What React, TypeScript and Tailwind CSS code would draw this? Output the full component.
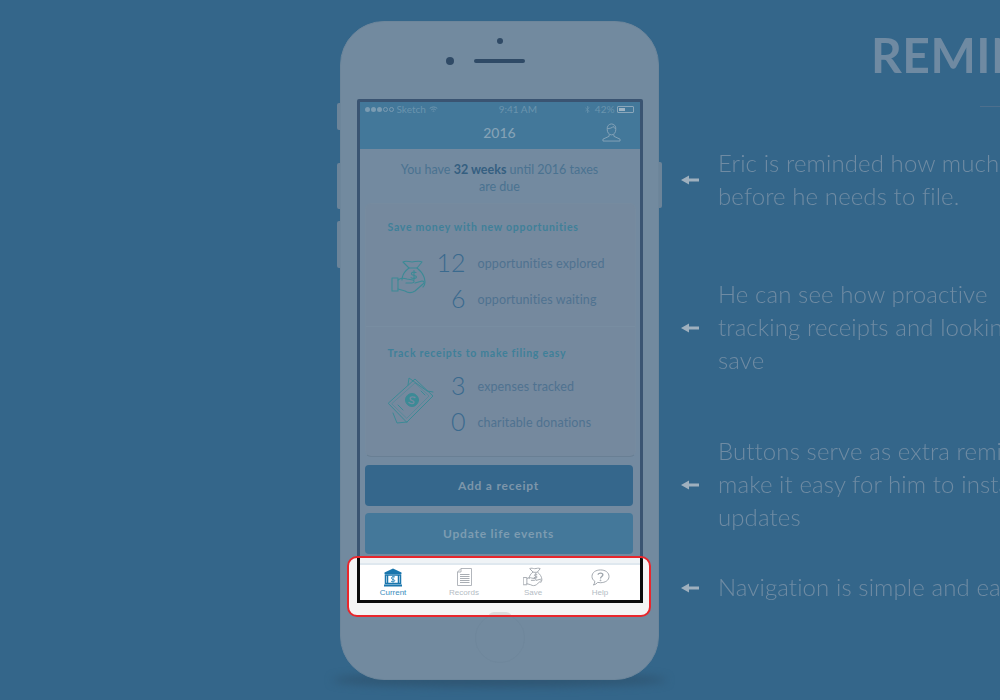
const Bag = ({ c, w = 1.1 }: { c: string; w?: number }) => (
  <svg viewBox="0 0 36 36" className="w-full h-full" fill="none" stroke={c} strokeWidth={w} strokeLinejoin="round" strokeLinecap="round">
    <path d="M18 9 L12 3 C15 1 18 3 21 3 C24 3 28 1 31 3 L26 9 Z" />
    <path d="M18 9 C14 12 11 16 11 21 M26 9 C31 13 34 18 34 23 C34 25 33 27 32 28" />
    <path d="M1 19 H7 V32 H1 Z" />
    <path d="M7 21 C10 18 13 19 16 20 L22 21 C24 22 23 24 21 24 L15 24 M24 24 L31 22 C33 22 34 24 32 25 L24 32 C21 34 17 34 14 32 L7 30" />
    <path d="M25 13.500 C22.500 12.500 20 13.500 20.500 15.200 C21 17 25.500 16 25.500 18 C25.500 19.500 22.500 20 20 18.800 M23 11.500 V20.500" />
  </svg>
);

const Cash = () => (
  <svg viewBox="0 0 48 48" className="w-full h-full" fill="none" stroke="#3c8a96" strokeWidth="1" strokeLinejoin="round" strokeLinecap="round">
    <path d="M0.500 26 L27 2 L45 19 L19 45 Z" />
    <path d="M4 26.500 L27 6 L41 19 L19 41 Z" strokeWidth="0.500" />
    <path d="M20 8 L21 1 L39 14 L45 15" />
    <path d="M5 36 L9 46 L19 45" />
    <path d="M10 28 L15 33 M33 14 L37 18" />
    <circle cx="24" cy="23" r="6.500" fill="#3c8a96" />
    <path d="M27 20.500 C24 19 21.500 20.500 22.500 22.500 C23.500 24 26.500 23.500 26 25.500 C25.500 27 23 27 21 25.500" stroke="#738aa0" strokeWidth="1.400" />
  </svg>
);

const Note = ({ lines }: { lines: string[] }) => (
  <div className="flex items-center">
    <svg viewBox="0 0 18 10" className="w-[18px] h-[10px] shrink-0 mr-[19px]">
      <path d="M0 5 L8 0.500 V3.500 H18 V6.500 H8 V9.500 Z" fill="#9fb0be" />
    </svg>
    <div className="text-[24px] leading-[33px] font-light text-[#6f8ba3] whitespace-nowrap tracking-[0.1px] -translate-y-px">
      {lines.map((l) => (
        <div key={l}>{l}</div>
      ))}
    </div>
  </div>
);

const Stat = ({ n, label }: { n: string; label: string }) => (
  <div className="flex items-center h-[36px]">
    <div className="w-[41px] text-right text-[25px] font-light text-[#3a6a8e] -translate-y-px">{n}</div>
    <div className="ml-[12px] text-[12.5px] text-[#4f7290] tracking-[0.12px]">{label}</div>
  </div>
);

const Tab = ({ label, active, className, children }: { label: string; active?: boolean; className: string; children: React.ReactNode }) => (
  <div className={`w-[60px] flex flex-col items-center ${className}`}>
    <div className="h-[20px] flex items-center justify-center">{children}</div>
    <div className={`text-[8px] leading-[10px] mt-[1px] font-['Liberation_Sans',sans-serif] ${active ? "text-[#3a8dbd]" : "text-[#b4bcc4]"}`}>{label}</div>
  </div>
);

export default function App() {
  return (
    <div className="w-[1000px] h-[700px] overflow-hidden bg-[#34668a] flex pl-[340px] font-['Lato',sans-serif]">
      <div className="relative w-[319px] h-[659px] mt-[21px] shrink-0 blur-[0.4px]">
        {/* shadow + side keys */}
        <div className="absolute left-[-8px] right-[-8px] bottom-[-7px] h-[14px] rounded-[50%] bg-[#2f5673] blur-[4px]" />
        <div className="absolute left-[-3px] top-[82px] w-[4px] h-[27px] rounded-l-[2px] bg-[#6c8499]" />
        <div className="absolute left-[-3px] top-[142px] w-[4px] h-[46px] rounded-l-[2px] bg-[#6c8499]" />
        <div className="absolute left-[-3px] top-[200px] w-[4px] h-[47px] rounded-l-[2px] bg-[#6c8499]" />
        <div className="absolute right-[-3px] top-[141px] w-[4px] h-[46px] rounded-r-[2px] bg-[#6c8499]" />

        <div className="relative h-full rounded-[44px] bg-[#728a9f] border border-[#6d869b] flex flex-col items-center">
          <div className="w-[6px] h-[6px] rounded-full bg-[#2f4a66] mt-[16px]" />
          <div className="flex items-center mt-[13px] h-[8px] relative">
            <div className="absolute left-[-28px] w-[8px] h-[8px] rounded-full bg-[#2f4a66]" />
            <div className="w-[51px] h-[4px] rounded-full bg-[#2f4a66]" />
          </div>

          {/* Screen */}
          <div className="w-[286px] h-[505px] mt-[34px] border-[3px] border-[#3a5472] rounded-[2px] bg-[#738aa0] flex flex-col">
            <div className="bg-[#43789a] h-[47px] shrink-0 relative">
              <div className="h-[14px] px-[5px] flex items-center justify-between text-[10px] text-[#6a94ae]">
                <div className="flex items-center gap-[3px]">
                  <span className="flex gap-[1px]">
                    <i className="w-[5px] h-[5px] rounded-full bg-[#7a9bb2]" />
                    <i className="w-[5px] h-[5px] rounded-full bg-[#7a9bb2]" />
                    <i className="w-[5px] h-[5px] rounded-full bg-[#7a9bb2]" />
                    <i className="w-[5px] h-[5px] rounded-full border border-[#7a9bb2]" />
                    <i className="w-[5px] h-[5px] rounded-full border border-[#7a9bb2]" />
                  </span>
                  <span>Sketch</span>
                  <svg viewBox="0 0 12 9" className="w-[9px] h-[7px]" fill="none" stroke="#7a9bb2" strokeWidth="1.100">
                    <path d="M1 3 C4 0.500 8 0.500 11 3 M3 5 C5 3.500 7 3.500 9 5 M5 7 C5.600 6.500 6.400 6.500 7 7" />
                  </svg>
                </div>
                <span className="ml-[13px]">9:41 AM</span>
                <div className="flex items-center gap-[3px]">
                  <svg viewBox="0 0 6 10" className="w-[5px] h-[9px]" fill="none" stroke="#6a94ae" strokeWidth="0.800">
                    <path d="M0.500 3 L5 7 L3 9 V1 L5 3 L0.500 7" />
                  </svg>
                  <span className="ml-[2px]">42%</span>
                  <div className="w-[17px] h-[7px] border border-[#8aa6ba] rounded-[1px] p-[1px]">
                    <div className="w-[6px] h-full bg-[#9db3c3]" />
                  </div>
                </div>
              </div>
              <div className="text-center text-[14px] font-medium text-[#85a2b6] mt-[4px] leading-[26px]">2016</div>
              <svg viewBox="0 0 20 20" className="absolute right-[19px] top-[21px] w-[19px] h-[19px]" fill="none" stroke="#86a3b8" strokeWidth="1">
                <path d="M5.500 7 C5 3 7.500 1 10 1 C12.500 1 15 3 14.500 7 C14.500 10 12.500 12.500 10 12.500 C7.500 12.500 5.500 10 5.500 7 Z" />
                <path d="M5.500 6 C8 6 11 5 12 3.500 C12.500 5 13.500 6 14.500 6" />
                <path d="M7.500 12 V14 L1 17 V19 H19 V17 L12.500 14 V12" />
              </svg>
            </div>

            <div className="flex-1 min-h-0 px-[5px] flex flex-col">
              <div className="text-center text-[12.5px] leading-[17px] text-[#4a7290] mt-[12px] px-[30px]">
                You have <b className="font-bold text-[#355f80]">32 weeks</b> until 2016 taxes are due
              </div>

              <div className="mt-[8px] w-[271px] h-[254px] rounded-[6px] border border-[#768b9f] border-b-[#697f94] bg-[#75899e] shrink-0 flex flex-col">
                <div className="h-[123px] border-b border-[#788da1] pl-[22px] pt-[16px]">
                  <div className="text-[10.5px] leading-[14px] font-bold text-[#3f8099] tracking-[0.73px]">Save money with new opportunities</div>
                  <div className="flex mt-[12px]">
                    <div className="w-[36px] h-[36px] ml-[3px] mt-[13px]"><Bag c="#3c8a96" /></div>
                    <div className="ml-[-2px]">
                      <Stat n="12" label="opportunities explored" />
                      <Stat n="6" label="opportunities waiting" />
                    </div>
                  </div>
                </div>
                <div className="pl-[22px] pt-[19px]">
                  <div className="text-[10.5px] leading-[14px] font-bold text-[#3f8099] tracking-[0.73px]">Track receipts to make filing easy</div>
                  <div className="flex mt-[9px]">
                    <div className="w-[48px] h-[48px] mt-[8px]"><Cash /></div>
                    <div className="ml-[-11px]">
                      <Stat n="3" label="expenses tracked" />
                      <Stat n="0" label="charitable donations" />
                    </div>
                  </div>
                </div>
              </div>

              <div className="mt-[8px] w-[268px] h-[41px] rounded-[4px] bg-[#35678c] flex items-center justify-center text-[12px] font-bold text-[#7d96aa] tracking-[0.8px]">Add a receipt</div>
              <div className="mt-[7px] w-[268px] h-[41px] rounded-[4px] bg-[#44789a] flex items-center justify-center text-[12px] font-bold text-[#7d9cb1] tracking-[0.8px]">Update life events</div>
            </div>
          </div>

          {/* Home button */}
          <div className="w-[50px] h-[50px] mt-[9px] rounded-full border border-[#6f879c]" />
        </div>

        {/* Highlighted region */}
        <div className="absolute left-[7px] top-[535px] w-[304px] h-[61px] rounded-[10px] border-2 border-[#e8262c] bg-[#f4f4f4] overflow-hidden px-[8px]">
          <div className="w-[286px] h-[45px] border-x-[3px] border-b-[3px] border-[#0a0a0a] bg-white">
            <div className="h-[5px] bg-[#eff3f6]" />
            <div className="h-[2px] bg-[#dfe8ef]" />
            <div className="flex pl-[3px] pt-[2px]">
              <Tab label="Current" active className="">
                <svg viewBox="0 0 18 18" className="w-[18px] h-[19px]" fill="none">
                  <path d="M9 0 L17.500 4 V5.500 H0.500 V4 Z" fill="#1a76ad" />
                  <path d="M1.500 6.500 H16.500 V15 H1.500 Z" stroke="#1a76ad" strokeWidth="1.500" />
                  <path d="M3.500 6.500 V15 M14.500 6.500 V15" stroke="#1a76ad" strokeWidth="1.500" />
                  <path d="M0 16 H18 V18 H0 Z" fill="#1a76ad" />
                  <path d="M11 8.500 C9 7.500 7 8.500 7.500 10 C8 11.500 11 10.800 10.800 12.300 C10.500 13.500 8.500 13.500 7 12.700 M9 7.500 V14" stroke="#2a86bb" strokeWidth="0.900" />
                </svg>
              </Tab>
              <Tab label="Records" className="ml-[11px]">
                <svg viewBox="0 0 15 18" className="w-[15px] h-[18px]" fill="none" stroke="#a9aeb4" strokeWidth="0.900">
                  <path d="M4 0.500 H14.500 V17.500 H0.500 V4 Z" />
                  <path d="M4 0.500 V4 H0.500" />
                  <path d="M3 6.500 H12.500 M3 8.500 H12.500 M3 10.500 H12.500 M3 12.500 H12.500 M3 14.500 H12.500" strokeWidth="1.100" />
                </svg>
              </Tab>
              <Tab label="Save" className="ml-[9px]">
                <div className="w-[20px] h-[20px]"><Bag c="#a9aeb4" w={1.8} /></div>
              </Tab>
              <Tab label="Help" className="ml-[7px]">
                <svg viewBox="0 0 20 18" className="w-[19px] h-[17px]" fill="none" stroke="#9ea5ac" strokeWidth="1">
                  <path d="M10 1 C15 1 19 3.500 19 8 C19 12 15 14.500 10 14.500 C9 14.500 8 14.400 7 14.200 C6 15.500 4.500 16.500 2.500 17 C3.500 15.500 4 14.500 4 13 C2 11.800 1 10 1 8 C1 3.500 5 1 10 1 Z" />
                  <path d="M7.500 6 C7.500 3.800 12.500 3.800 12.500 6.200 C12.500 8 10 8 10 10" strokeWidth="1.400" />
                  <circle cx="10" cy="12" r="0.500" strokeWidth="1" />
                </svg>
              </Tab>
            </div>
          </div>
          <div className="absolute left-[139px] top-[54px] w-[24px] h-[6px] rounded-t-full bg-[#dcdcdc]" />
        </div>
      </div>

      {/* Notes */}
      <div className="ml-[22px] shrink-0 w-[400px] blur-[0.4px]">
        <div className="pl-[190px] h-[147px] relative">
          <div className="pt-[27px] text-[48px] leading-[56px] font-bold text-[#6f8aa2] whitespace-nowrap tracking-[0.5px]">REMINDERS</div>
          <div className="absolute left-[299px] top-[106px] w-[60px] h-[1px] bg-[#4d6f8d]" />
        </div>
        <Note lines={["Eric is reminded how much", "before he needs to file."]} />
        <div className="h-[65px]" />
        <Note lines={["He can see how proactive", "tracking receipts and looking", "save"]} />
        <div className="h-[58px]" />
        <Note lines={["Buttons serve as extra reminders", "make it easy for him to instantly", "updates"]} />
        <div className="h-[37px]" />
        <Note lines={["Navigation is simple and easy"]} />
      </div>
    </div>
  );
}
